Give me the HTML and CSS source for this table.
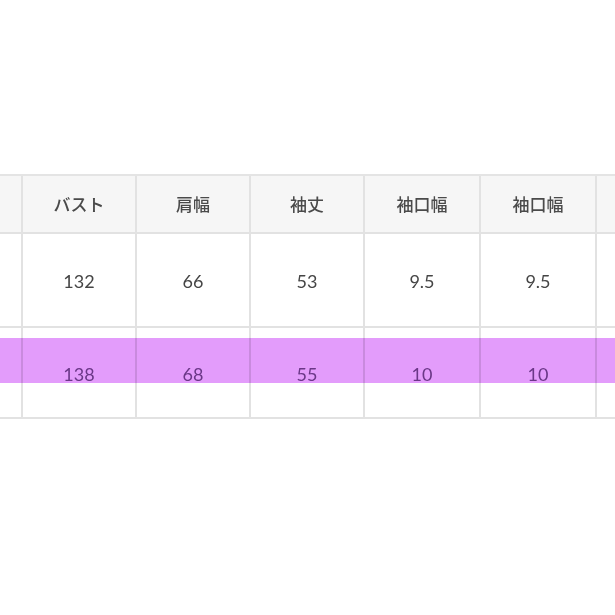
FILE: index.html
```html
<!DOCTYPE html>
<html lang="ja">
<head>
<meta charset="utf-8">
<link rel="stylesheet" href="styles.css">
</head>
<body>
<div class="page">
  <div class="sheet">
    <div class="grid">
      <div class="cell head edge-l"></div>
      <div class="cell head">バスト</div>
      <div class="cell head">肩幅</div>
      <div class="cell head">袖丈</div>
      <div class="cell head">袖口幅</div>
      <div class="cell head">袖口幅</div>
      <div class="cell head edge-r"></div>

      <div class="cell row1 edge-l"></div>
      <div class="cell row1 num">132</div>
      <div class="cell row1 num">66</div>
      <div class="cell row1 num">53</div>
      <div class="cell row1 num">9.5</div>
      <div class="cell row1 num">9.5</div>
      <div class="cell row1 edge-r"></div>

      <div class="cell row2 edge-l"></div>
      <div class="cell row2 num">138</div>
      <div class="cell row2 num">68</div>
      <div class="cell row2 num">55</div>
      <div class="cell row2 num">10</div>
      <div class="cell row2 num">10</div>
      <div class="cell row2 edge-r"></div>
    </div>
    <div class="marker"></div>
  </div>
</div>
</body>
</html>
```
FILE: styles.css
```css
html, body {
  margin: 0;
  padding: 0;
  background: #ffffff;
}
.page {
  width: 615px;
  height: 615px;
  overflow: hidden;
  padding-top: 174px;
  box-sizing: border-box;
}
.sheet {
  position: relative;
}
.grid {
  display: grid;
  grid-template-columns: 23px 114px 114px 114px 116px 116px 18px;
  grid-template-rows: 58px 94px 91px;
  border-top: 2px solid #e4e4e4;
  box-sizing: border-box;
  font-family: "Lato", "Noto Sans CJK JP", sans-serif;
  color: #454545;
}
.cell {
  border-right: 2px solid #e2e2e2;
  border-bottom: 2px solid #e2e2e2;
  display: flex;
  align-items: center;
  justify-content: center;
  box-sizing: border-box;
}
.edge-r {
  border-right: none;
}
.head {
  background: #f6f6f6;
  font-family: "Noto Sans CJK JP", sans-serif;
  font-size: 17px;
  font-weight: 500;
  color: #4a4a4a;
  padding-bottom: 2px;
}
.num {
  font-size: 18px;
}
.row1 {
  padding-top: 2px;
}
.row2 {
  align-items: flex-start;
  padding-top: 35px;
  color: #785a8a;
}
.marker {
  position: absolute;
  left: 0;
  right: 0;
  top: 164px;
  height: 45px;
  background: #e39cfb;
  mix-blend-mode: multiply;
}
```
